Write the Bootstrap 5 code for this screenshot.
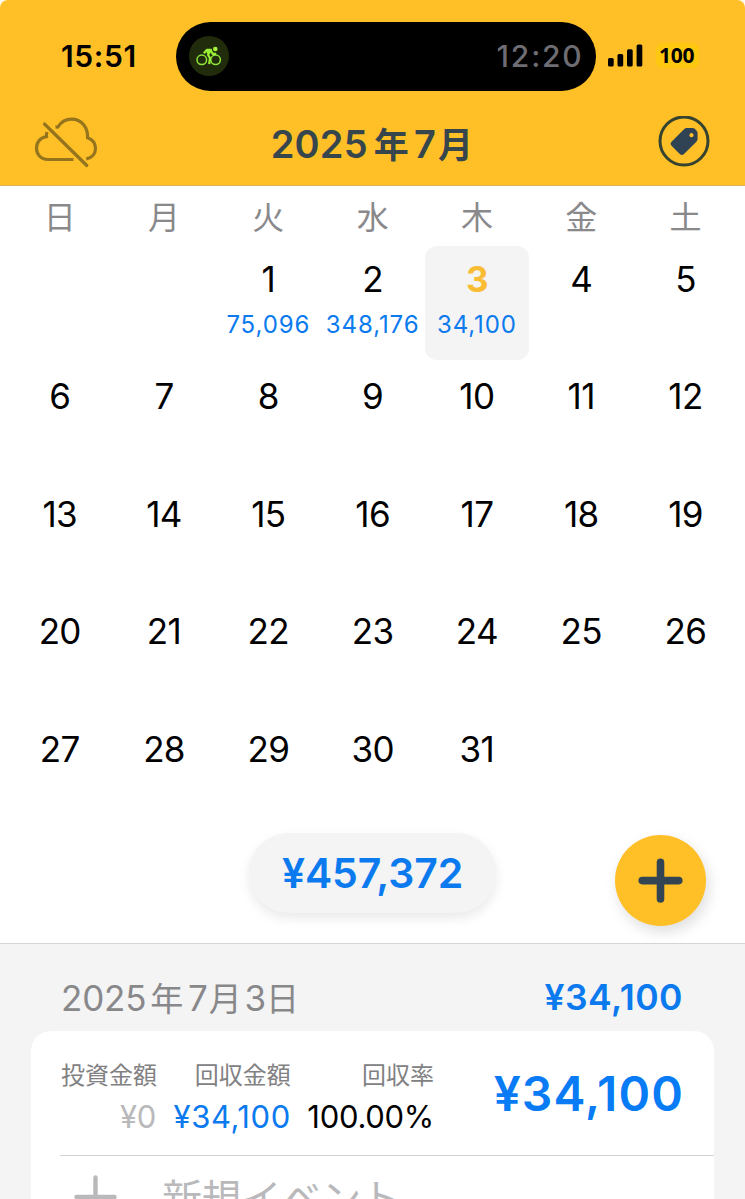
<!DOCTYPE html>
<html lang="ja">
<head>
<meta charset="utf-8">
<meta name="viewport" content="width=device-width, initial-scale=1">
<title>2025年7月</title>
<link href="https://cdn.jsdelivr.net/npm/bootstrap@5.3.0/dist/css/bootstrap.min.css" rel="stylesheet">
<style>
  :root { --amber:#ffbf27; --ink:#36464c; --blue:#0a7aee; --soft:#f4f4f4; }
  html, body { height:1199px; overflow:hidden; }
  body { font-family:Inter,"Noto Sans CJK JP",sans-serif; background:#fffdf0; color:#000; white-space:nowrap; }
  .screen { width:745px; height:1199px; background:#fff; border-radius:12px 12px 0 0; }
  .topbar { height:186px; background:var(--amber); border-bottom:1px solid #dcb45a; }
  .status { height:112px; padding-left:61px; }
  .clock { width:115px; font-size:30px; font-weight:600; line-height:112px; letter-spacing:.6px; }
  .island { width:420px; height:69px; margin-top:.5px; padding:0 12.500px 0 13px; background:#000; border-radius:35px; }
  .timer { color:#6e6d73; font-size:30px; font-weight:500; line-height:69px; letter-spacing:1.8px; }
  .signal { margin-left:12px; }
  .battery { width:43px; height:25px; margin:-2px 0 0 13px; padding-left:3px; border-radius:7px; font-family:"Noto Sans",sans-serif; font-size:21px; font-weight:700; line-height:25px; letter-spacing:-.3px; background:#ffc810; }
  .titlebar { height:73px; padding:0 35px 0 34px; }
  .month { font-size:38px; font-weight:600; line-height:64px; color:var(--ink); letter-spacing:.2px; margin-right:13px; }
  .month .kanji { font-size:35px; }
  .month .year-mark { margin:0 5px 0 6px; }
  .month .month-mark { margin-left:2px; }
  .weekdays, .week { display:grid; grid-template-columns:repeat(7,104.3px); padding-left:7.6px; text-align:center; }
  .weekdays { height:60px; font-size:32px; line-height:63px; color:#89898c; }
  .week { height:117.4px; }
  .date-cell { height:113.5px; border-radius:12px; padding-top:13px; }
  .date-cell.active { background:var(--soft); }
  .num { font-size:35px; line-height:40px; letter-spacing:-.6px; }
  .active .num { color:#f8bd35; font-weight:700; }
  .sum { font-size:24px; line-height:30px; margin-top:11px; color:var(--blue); letter-spacing:.9px; }
  .totals { height:110px; padding:0 39px 0 249px; }
  .pill { width:247px; height:80px; border-radius:40px; background:var(--soft); color:var(--blue); font-size:41px; font-weight:600; line-height:80px; letter-spacing:-.1px; box-shadow:0 5px 12px rgba(0,0,0,.09); }
  .fab { width:91px; height:91px; margin-top:2px; border:0; border-radius:50%; background:var(--amber); box-shadow:3px 6px 14px rgba(0,0,0,.13); padding:0; }
  .details { height:256px; background:var(--soft); border-top:1px solid #d4d4d5; overflow:hidden; }
  .day-head { height:87px; padding:0 62px 0 61px; line-height:108px; }
  .day-title { color:#88888b; font-size:35px; letter-spacing:-.2px; }
  .day-title .kanji { font-size:33px; }
  .day-title .year-mark { margin:0 5px 0 4px; }
  .day-title .month-mark { margin:0 3px 0 1px; }
  .day-title .day-mark { margin-left:0; }
  .day-total { color:var(--blue); font-size:35.5px; font-weight:600; letter-spacing:.5px; }
  .entry { width:683px; height:190px; margin-left:31px; background:#fff; border-radius:20px; }
  .entry-row { height:125px; margin-left:29px; padding:30px 30px 0 1px; border-bottom:1px solid #d3d3d4; }
  .stat { text-align:right; margin-right:16.500px; }
  .stat-label { font-size:24px; line-height:30px; color:#818183; }
  .stat-value { font-size:31px; line-height:40px; margin-top:6px; letter-spacing:-.3px; }
  .stat-value.muted { color:#b9b9bb; padding-right:1px; }
  .stat-value.gain { color:var(--blue); letter-spacing:.6px; }
  .big { font-size:48px; font-weight:600; line-height:66px; color:#087bf5; letter-spacing:1.1px; }
  .new-row { padding-left:43px; height:84px; color:#b9b9bb; font-size:40px; line-height:85px; }
  .new-row svg { margin-top:19px; }
  .new-row span { margin-left:45px; letter-spacing:-.2px; }
</style>
</head>
<body>
<div class="screen d-flex flex-column">
  <header class="topbar rounded-top-3 flex-shrink-0">
    <div class="status d-flex align-items-center">
      <div class="clock">15:51</div>
      <div class="island d-flex align-items-center justify-content-between">
        <svg width="40" height="40" viewBox="0 0 40 40" fill="none">
          <circle cx="20" cy="20" r="20" fill="#202c0c"/>
          <g stroke="#8fe83a" stroke-width="1.5"><circle cx="12.8" cy="23.8" r="4.8"/><circle cx="26.6" cy="23.8" r="4.8"/></g>
          <circle cx="26.3" cy="13" r="2.3" fill="#a6f23c"/>
          <path d="M14.8 17.2 18 13.8h4l-3 5.2 2 3-.8 6.2M21.8 14.5l2 3.4h3.4" stroke="#9bef35" stroke-width="2.2" stroke-linejoin="round"/>
          <path d="m18 13 4 .2-2 4.8-2.6-.8z" fill="#9bef35"/>
        </svg>
        <span class="timer">12:20</span>
      </div>
      <svg class="signal flex-shrink-0" width="35" height="24" viewBox="0 0 35 24">
        <rect x="0" y="14" width="5.7" height="8.5" rx="1.5"/><rect x="9.5" y="10" width="5.7" height="12.5" rx="1.5"/><rect x="19" y="5.2" width="5.7" height="17.3" rx="1.5"/><rect x="28.6" y=".5" width="5.7" height="22" rx="1.5"/>
      </svg>
      <div class="battery">100</div>
    </div>
    <div class="titlebar d-flex justify-content-between">
      <svg class="mt-1" width="65" height="53" viewBox="0 0 65 53" fill="none" stroke="#94741c" stroke-width="3.2">
        <path d="M39.5 43.5H14C6.500 43.500 2.500 38 2.500 32c0-6 4-10.500 10-11.300-.2-1.500 0-3.200.5-4.700M21.500 11.200 24 10.900C27.500 5.500 32 3.200 37.500 3.200 47.500 3.200 54 11 53.600 21.800 58.500 23.600 61.500 27.500 61.500 32.500c0 5.200-3.500 9.500-9.200 10.400"/>
        <path d="M10.500 8 52.800 49.500" stroke-linecap="round"/>
      </svg>
      <div class="month">2025<span class="kanji year-mark">年</span>7<span class="kanji month-mark">月</span></div>
      <svg class="mt-1" width="52" height="52" viewBox="0 0 52 52">
        <circle cx="26" cy="25" r="24" fill="none" stroke="#36442f" stroke-width="3"/>
        <path fill-rule="evenodd" d="M26 13.200Q27.200 12 29 12h5.500q1.500 0 2.600 1.100l1.500 1.600Q39.600 15.800 39.600 17.200v5.600q0 1.700-1.200 2.900L26 38q-2.200 1.900-4.200 0L13.300 29.600q-1.500-2 0-3.700zM33.500 17.100a2.100 2.100 0 1 0 .01 0z" fill="#2f4354"/>
      </svg>
    </div>
  </header>
  <main class="flex-shrink-0">
    <div class="weekdays"><div>日</div><div>月</div><div>火</div><div>水</div><div>木</div><div>金</div><div>土</div></div>
    <div id="weeks"></div>
    <div class="totals d-flex justify-content-between align-items-start">
      <div class="pill text-center">¥457,372</div>
      <button class="fab" aria-label="追加"><svg width="91" height="91" viewBox="0 0 91 91" stroke="#334553" stroke-width="7.6" stroke-linecap="round"><path d="M45.500 27.300v36.600M27.200 45.600h36.600"/></svg></button>
    </div>
  </main>
  <section class="details flex-shrink-0">
    <div class="day-head d-flex justify-content-between">
      <div class="day-title">2025<span class="kanji year-mark">年</span>7<span class="kanji month-mark">月</span>3<span class="kanji day-mark">日</span></div>
      <div class="day-total">¥34,100</div>
    </div>
    <div class="entry">
      <div class="entry-row d-flex">
        <div class="stat"><div class="stat-label">投資金額</div><div class="stat-value muted">¥0</div></div>
        <div class="stat"><div class="stat-label">回収金額</div><div class="stat-value gain">¥34,100</div></div>
        <div class="stat"><div class="stat-label">回収率</div><div class="stat-value">100.00%</div></div>
        <div class="big ms-auto">¥34,100</div>
      </div>
      <div class="new-row d-flex">
        <svg width="43" height="43" viewBox="0 0 43 43" stroke="#b9b9bb" stroke-width="4.4" stroke-linecap="round"><path d="M21.500 2.500v38M2.500 22h38"/></svg>
        <span>新規イベント</span>
      </div>
    </div>
  </section>
</div>
<script src="https://cdn.jsdelivr.net/npm/bootstrap@5.3.0/dist/js/bootstrap.bundle.min.js"></script>
<script>
  const sums = {1:'75,096', 2:'348,176', 3:'34,100'};
  let html = '';
  for (let w = 0; w < 5; w++) {
    html += '<div class="week">';
    for (let d = 0; d < 7; d++) {
      const n = w * 7 + d - 1;
      html += `<div class="date-cell${n === 3 ? ' active' : ''}">` +
        (n > 0 && n <= 31 ? `<div class="num">${n}</div>` : '') +
        (sums[n] ? `<div class="sum">${sums[n]}</div>` : '') + '</div>';
    }
    html += '</div>';
  }
  document.getElementById('weeks').innerHTML = html;
</script>
</body>
</html>
